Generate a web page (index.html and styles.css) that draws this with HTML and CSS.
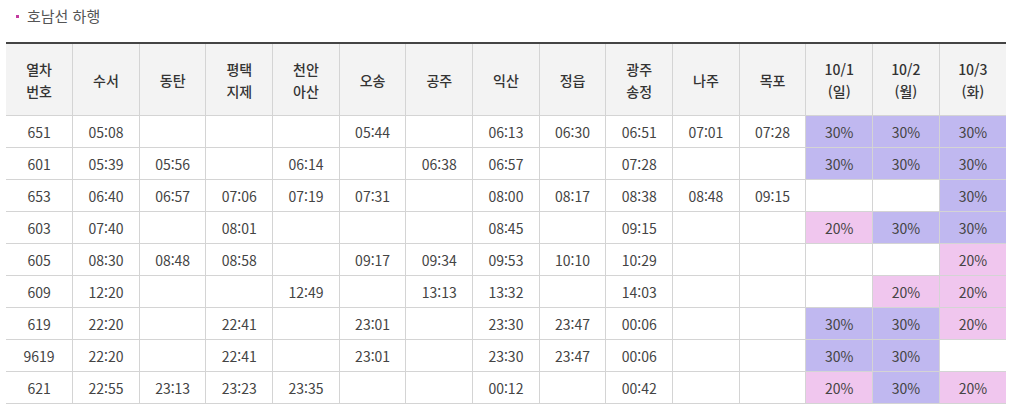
FILE: index.html
```html
<!DOCTYPE html>
<html lang="ko">
<head>
<meta charset="utf-8">
<link rel="stylesheet" href="styles.css">
</head>
<body>
<h3 class="title"><span class="dot"></span>호남선 하행</h3>
<table class="tt">
<thead>
<tr>
<th>열차<br>번호</th><th>수서</th><th>동탄</th><th>평택<br>지제</th><th>천안<br>아산</th><th>오송</th><th>공주</th><th>익산</th><th>정읍</th><th>광주<br>송정</th><th>나주</th><th>목포</th><th>10/1<br>(일)</th><th>10/2<br>(월)</th><th>10/3<br>(화)</th>
</tr>
</thead>
<tbody>
<tr><td>651</td><td>05:08</td><td></td><td></td><td></td><td>05:44</td><td></td><td>06:13</td><td>06:30</td><td>06:51</td><td>07:01</td><td>07:28</td><td class="p3">30%</td><td class="p3">30%</td><td class="p3">30%</td></tr>
<tr><td>601</td><td>05:39</td><td>05:56</td><td></td><td>06:14</td><td></td><td>06:38</td><td>06:57</td><td></td><td>07:28</td><td></td><td></td><td class="p3">30%</td><td class="p3">30%</td><td class="p3">30%</td></tr>
<tr><td>653</td><td>06:40</td><td>06:57</td><td>07:06</td><td>07:19</td><td>07:31</td><td></td><td>08:00</td><td>08:17</td><td>08:38</td><td>08:48</td><td>09:15</td><td></td><td></td><td class="p3">30%</td></tr>
<tr><td>603</td><td>07:40</td><td></td><td>08:01</td><td></td><td></td><td></td><td>08:45</td><td></td><td>09:15</td><td></td><td></td><td class="p2">20%</td><td class="p3">30%</td><td class="p3">30%</td></tr>
<tr><td>605</td><td>08:30</td><td>08:48</td><td>08:58</td><td></td><td>09:17</td><td>09:34</td><td>09:53</td><td>10:10</td><td>10:29</td><td></td><td></td><td></td><td></td><td class="p2">20%</td></tr>
<tr><td>609</td><td>12:20</td><td></td><td></td><td>12:49</td><td></td><td>13:13</td><td>13:32</td><td></td><td>14:03</td><td></td><td></td><td></td><td class="p2">20%</td><td class="p2">20%</td></tr>
<tr><td>619</td><td>22:20</td><td></td><td>22:41</td><td></td><td>23:01</td><td></td><td>23:30</td><td>23:47</td><td>00:06</td><td></td><td></td><td class="p3">30%</td><td class="p3">30%</td><td class="p2">20%</td></tr>
<tr><td>9619</td><td>22:20</td><td></td><td>22:41</td><td></td><td>23:01</td><td></td><td>23:30</td><td>23:47</td><td>00:06</td><td></td><td></td><td class="p3">30%</td><td class="p3">30%</td><td></td></tr>
<tr><td>621</td><td>22:55</td><td>23:13</td><td>23:23</td><td>23:35</td><td></td><td></td><td>00:12</td><td></td><td>00:42</td><td></td><td></td><td class="p2">20%</td><td class="p3">30%</td><td class="p2">20%</td></tr>
</tbody>
</table>
</body>
</html>
```
FILE: styles.css
```css
html, body {
  margin: 0;
  padding: 0;
  background: #fff;
}
body {
  font-family: "Noto Sans CJK KR", "Noto Sans", sans-serif;
  color: #444;
}
.title {
  margin: 0;
  padding: 5px 0 0 16px;
  height: 42px;
  box-sizing: border-box;
  display: flex;
  align-items: flex-start;
  font-size: 15px;
  font-weight: 400;
  line-height: 22px;
  color: #555;
}
.dot {
  display: inline-block;
  width: 3px;
  height: 3px;
  background: #c33ba0;
  margin: 10px 8px 0 0;
}
.tt {
  margin-left: 6px;
  width: 1000px;
  table-layout: fixed;
  border-collapse: collapse;
  border-top: 2px solid #444;
  font-size: 14px;
}
.tt th, .tt td {
  border: 1px solid #d4d4d4;
  text-align: center;
  padding: 0;
}
.tt tr > :first-child { border-left: none; }
.tt tr > :last-child { border-right: none; }
.tt th {
  background: #f3f3f3;
  height: 71px;
  font-weight: 500;
  color: #333;
  line-height: 22px;
}
.tt td {
  height: 31px;
  line-height: 20px;
  color: #444;
}
.tt td.p3 { background: #c0b8f0; }
.tt td.p2 { background: #f0c6ee; }
```
